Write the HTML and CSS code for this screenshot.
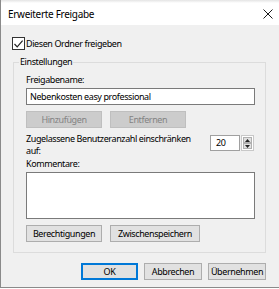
FILE: index.html
```html
<!DOCTYPE html>
<html lang="de">
<head>
<meta charset="utf-8">
<title>Erweiterte Freigabe</title>
<link rel="stylesheet" href="styles.css">
</head>
<body>
<div class="window">
  <div class="topline"></div>
  <div class="titlebar">
    <span class="title">Erweiterte Freigabe</span>
    <svg class="close" width="10" height="10" viewBox="0 0 10 10"><path d="M0.5 0.5 L9.5 9.5 M9.5 0.5 L0.5 9.5" stroke="#1a1a1a" stroke-width="1" fill="none"/></svg>
  </div>
  <div class="content">
    <div class="check-row">
      <span class="checkbox"><svg width="11" height="10" viewBox="0 0 11 10"><path d="M1.5 5 L4.2 7.8 L9.6 1.6" stroke="#222" stroke-width="1.2" fill="none"/></svg></span>
      <span>Diesen Ordner freigeben</span>
    </div>
    <div class="group">
      <span class="group-title">Einstellungen</span>
      <div class="label first">Freigabename:</div>
      <div class="textbox">Nebenkosten easy professional</div>
      <div class="btn-row">
        <span class="btn disabled w76">Hinzufügen</span>
        <span class="btn disabled w76">Entfernen</span>
      </div>
      <div class="limit-row">
        <div class="label limit">Zugelassene Benutzeranzahl einschränken auf:</div>
        <div class="spin">
          <span class="spin-input">20</span>
          <span class="spin-buttons">
            <span class="spin-btn"><svg width="5" height="3" viewBox="0 0 5 3"><path d="M0 3 L2.5 0 L5 3 Z" fill="#222"/></svg></span>
            <span class="spin-btn"><svg width="5" height="3" viewBox="0 0 5 3"><path d="M0 0 L5 0 L2.5 3 Z" fill="#222"/></svg></span>
          </span>
        </div>
      </div>
      <div class="label comments">Kommentare:</div>
      <div class="textarea"></div>
      <div class="btn-row bottom-group">
        <span class="btn w76">Berechtigungen</span>
        <span class="btn w90">Zwischenspeichern</span>
      </div>
    </div>
    <div class="dialog-buttons">
      <span class="btn default w57">OK</span>
      <span class="btn w58">Abbrechen</span>
      <span class="btn w58">Übernehmen</span>
    </div>
  </div>
</div>
</body>
</html>
```
FILE: styles.css
```css
html, body {
  margin: 0;
  padding: 0;
  background: #ffffff;
}
body {
  width: 279px;
  height: 289px;
  overflow: hidden;
  font-family: "Segoe UI", "Noto Sans", "Open Sans", sans-serif;
  font-size: 9px;
  letter-spacing: -0.4px;
  color: #000;
}
.window {
  width: 279px;
  height: 288px;
  box-sizing: border-box;
  border-left: 1px solid #8a8a8a;
  border-bottom: 1px solid #8a8a8a;
  display: flex;
  flex-direction: column;
}
.topline {
  height: 3px;
  background: linear-gradient(#e4e4e4, #ffffff);
}
.titlebar {
  height: 22px;
  background: #fff;
  display: flex;
  align-items: center;
  justify-content: space-between;
  padding: 0 6px 0 7px;
}
.title {
  font-size: 10px;
  letter-spacing: -0.3px;
}
.content {
  flex: 1;
  background: #f0f0f0;
  padding: 12px 12px 0 11px;
  display: flex;
  flex-direction: column;
}
.check-row {
  display: flex;
  align-items: center;
  height: 13px;
  gap: 1px;
}
.checkbox {
  width: 11px;
  height: 11px;
  border: 1px solid #333;
  background: #fff;
  display: flex;
  align-items: center;
  justify-content: center;
}
.group {
  margin-top: 12px;
  margin-left: 1px;
  width: 253px;
  box-sizing: border-box;
  border: 1px solid #dcdcdc;
  padding: 0 10px 10px 12px;
  display: flex;
  flex-direction: column;
}
.group-title {
  align-self: flex-start;
  margin: -7px 0 0 -7px;
  padding: 0 1px;
  line-height: 12px;
  background: #f0f0f0;
}
.label {
  line-height: 12px;
}
.label.first {
  margin-top: 6px;
}
.textbox {
  margin-top: 2px;
  height: 15px;
  border: 1px solid #7a7a7a;
  background: #fff;
  padding-left: 3px;
  line-height: 15px;
}
.btn-row {
  display: flex;
  gap: 8px;
  margin-top: 6px;
}
.btn {
  box-sizing: border-box;
  height: 17px;
  border: 1px solid #adadad;
  background: #e1e1e1;
  display: flex;
  align-items: center;
  justify-content: center;
}
.btn.disabled {
  background: #cccccc;
  border-color: #bfbfbf;
  color: #838383;
}
.w76 { width: 76px; }
.w90 { width: 90px; }
.w57 { width: 57px; }
.w58 { width: 58px; }
.limit-row {
  display: flex;
  justify-content: space-between;
  align-items: flex-start;
  margin-top: 5px;
}
.label.limit {
  width: 172px;
}
.spin {
  display: flex;
  margin-top: 2px;
  margin-right: 1px;
}
.spin-input {
  box-sizing: border-box;
  width: 30px;
  height: 16px;
  border: 1px solid #a0a0a0;
  background: #fff;
  padding-left: 5px;
  line-height: 14px;
}
.spin-buttons {
  margin-left: 1px;
  width: 13px;
  height: 16px;
  box-sizing: border-box;
  border: 1px solid #c8c8c8;
  background: #fff;
  display: flex;
  flex-direction: column;
  padding: 1px;
}
.spin-btn {
  flex: 1;
  background: #e1e1e1;
  border: 1px solid #b0b0b0;
  display: flex;
  align-items: center;
  justify-content: center;
}
.label.comments {
  margin-top: 1px;
}
.textarea {
  margin-top: 2px;
  height: 45px;
  border: 1px solid #7a7a7a;
  background: #fff;
}
.bottom-group {
  margin-top: 6px;
}
.dialog-buttons {
  display: flex;
  justify-content: flex-end;
  gap: 6px;
  margin-top: 10px;
  width: 254px;
}
.btn.default {
  border: 2px solid #0078d7;
}
```
